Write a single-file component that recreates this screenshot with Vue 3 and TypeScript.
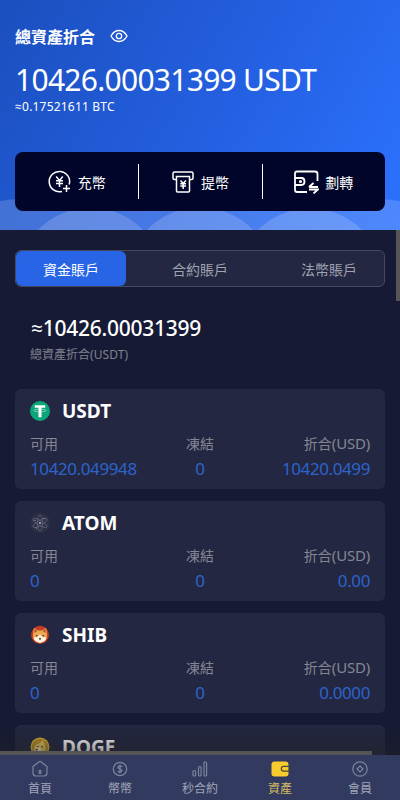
<script setup lang="ts">
import { ref } from 'vue'

interface Balance {
  available: string
  frozen: string
  value: string
}

interface Asset {
  symbol: string
  balance?: Balance
}

const assets: Asset[] = [
  { symbol: 'USDT', balance: { available: '10420.049948', frozen: '0', value: '10420.0499' } },
  { symbol: 'ATOM', balance: { available: '0', frozen: '0', value: '0.00' } },
  { symbol: 'SHIB', balance: { available: '0', frozen: '0', value: '0.0000' } },
  { symbol: 'DOGE' },
]

const tabs = ['資金賬戶', '合約賬戶', '法幣賬戶']
const activeTab = ref(0)
</script>

<template>
  <div class="page">
    <header class="hero">
      <svg class="waves" viewBox="0 0 400 230" aria-hidden="true">
        <path d="M0 201Q30 197 60 197H340Q370 197 400 201V230H0Z" />
        <path d="M38 230A73 73 0 0 1 143 230Z" />
        <path d="M147 230A73 73 0 0 1 253 230Z" />
        <path d="M258 230A73 73 0 0 1 362 230Z" />
      </svg>
      <div class="hero-title">
        <span>總資產折合</span>
        <svg class="eye" viewBox="0 0 18 14">
          <path d="M1 7Q4 1.5 9 1.5T17 7Q14 12.5 9 12.5T1 7Z" />
          <circle cx="9" cy="7" r="2.7" />
        </svg>
      </div>
      <div class="total">10426.00031399 USDT</div>
      <div class="btc">≈0.17521611 BTC</div>
      <div class="actions">
        <button class="action">
          <svg class="action-icon" viewBox="0 0 24 24">
            <path d="M21.2 14.5A10.2 10.2 0 1 0 14 21.5M18.5 15v7M15 18.5h7" />
            <path d="M8.2 6.5l3.3 4 3.3-4M8 10.8h7M8 13.5h7M11.5 10.5V17" />
          </svg>
          <span>充幣</span>
        </button>
        <button class="action">
          <svg class="action-icon" viewBox="0 0 24 24">
            <path d="M5.5 9.500H3.500Q2 9.500 2 8V3.500Q2 2 3.500 2h17Q22 2 22 3.500V8Q22 9.500 20.500 9.500H18.500M5.500 6.500h13V21Q18.500 22 17.500 22H6.500Q5.500 22 5.500 21Z" />
            <path d="M9.500 10.500l2.700 3 2.700-3M9.300 13.800h5.700M9.300 16h5.700M12.200 13.500V19" />
          </svg>
          <span>提幣</span>
        </button>
        <button class="action">
          <svg class="action-icon wide" viewBox="0 0 26 24">
            <path d="M14 22H4Q2 22 2 20V3.500Q2 1.500 4 1.500H22Q24.500 1.500 24.500 4V11M2 8H8.500Q11.500 8 11.500 11.500T8.500 15H2" />
            <path d="M16 17h9M20.500 13L16 17M16 19.500h9L20.500 23.500" />
            <circle cx="7.500" cy="11.500" r=".7" />
          </svg>
          <span>劃轉</span>
        </button>
      </div>
    </header>

    <main class="body">
      <nav class="tabs">
        <button v-for="(tab, i) in tabs" :key="tab" class="tab" :class="{ active: i === activeTab }" @click="activeTab = i">
          {{ tab }}
        </button>
      </nav>

      <section class="summary">
        <div class="summary-value">≈10426.00031399</div>
        <div class="summary-label">總資產折合<span class="unit-small">(USDT)</span></div>
      </section>

      <article v-for="asset in assets" :key="asset.symbol" class="card">
        <div class="card-head">
          <svg v-if="asset.symbol === 'USDT'" class="coin" viewBox="0 0 20 20">
            <circle cx="10" cy="10" r="10" fill="#0da579" />
            <ellipse cx="10" cy="9.500" rx="6" ry="1.300" fill="none" stroke="#a5dfcb" stroke-width=".7" />
            <path d="M4.800 4.200h10.400v2.600h-3.700v9.400H8.500V6.800H4.800Z" fill="#fff" />
          </svg>
          <svg v-else-if="asset.symbol === 'ATOM'" class="coin" viewBox="0 0 20 20">
            <circle cx="10" cy="10" r="10" fill="#2e3045" />
            <g fill="none" stroke="#62667f" stroke-width=".7">
              <ellipse cx="10" cy="10" rx="2.500" ry="8" />
              <ellipse cx="10" cy="10" rx="2.500" ry="8" transform="rotate(60 10 10)" />
              <ellipse cx="10" cy="10" rx="2.500" ry="8" transform="rotate(120 10 10)" />
            </g>
            <g fill="#b2b4c4">
              <circle cx="10" cy="10" r="1.100" />
              <circle cx="5" cy="7.500" r=".6" />
              <circle cx="14" cy="5.500" r=".6" />
              <circle cx="6.500" cy="15" r=".6" />
            </g>
          </svg>
          <svg v-else-if="asset.symbol === 'SHIB'" class="coin" viewBox="0 0 20 20">
            <circle cx="10" cy="9.800" r="9" fill="#c83c25" />
            <path d="M4 3l4 2.500h4L16 3l1 7q0 4-2.500 6L10 18l-4.500-2Q3 14 3 10Z" fill="#efaa53" />
            <path d="M4.500 4l2.700 2-2.500 2ZM15.500 4l-2.700 2 2.500 2Z" fill="#a3552c" />
            <path d="M3.400 12.500l4-.5L10 9.500l2.600 2.500 4 .5q-.5 2.800-3 4.200L10 18l-3.600-1.300Q3.900 15.300 3.400 12.500Z" fill="#fff2dc" />
            <path d="M5.500 10l2.500.8-1.500.8ZM14.500 10l-2.500.8 1.500.8ZM8.700 13.200h2.600L10 15.300Z" fill="#24191a" />
          </svg>
          <svg v-else class="coin" viewBox="0 0 20 20">
            <circle cx="10" cy="10" r="9.500" fill="#dcb032" />
            <circle cx="10" cy="10" r="8" fill="#b88d26" />
            <path d="M4 15q-.5-6 3-8l2-.5L13 3l1.500 4q2 4 .5 8l-5 3Z" fill="#e2c35c" />
            <path d="M4.500 12l4-2.500 3 3-2.500 3.500-4 .2Z" fill="#f6e8c0" />
            <path d="M7 9h1.500v1.200H7ZM11.500 9H13v1.200h-1.500ZM5.500 12h2.300v1.500H5.500Z" fill="#4e3816" />
          </svg>
          <span class="symbol">{{ asset.symbol }}</span>
        </div>
        <div v-if="asset.balance" class="grid">
          <div class="col">
            <div class="label">可用</div>
            <div class="num">{{ asset.balance.available }}</div>
          </div>
          <div class="col center">
            <div class="label">凍結</div>
            <div class="num">{{ asset.balance.frozen }}</div>
          </div>
          <div class="col right">
            <div class="label">折合<span class="unit">(USD)</span></div>
            <div class="num">{{ asset.balance.value }}</div>
          </div>
        </div>
      </article>
    </main>

    <div class="scroll-y"></div>
    <div class="fade"></div>
    <div class="scroll-x"></div>

    <footer class="tabbar">
      <a class="item">
        <svg class="nav-icon" viewBox="0 0 18 18"><path d="M2 6.500L8.200 1.700Q9 1.200 9.800 1.700L16 6.500V13Q16 16 13 16H5Q2 16 2 13ZM8.300 10.500h1.400v3H8.300Z" /></svg>
        <span>首頁</span>
      </a>
      <a class="item">
        <svg class="nav-icon" viewBox="0 0 18 18"><circle cx="9" cy="9" r="6.700" /><path d="M11.200 6.800Q9 5.200 7.500 6.500T9 9t1.500 2.500-3.700-.3M9 4.500v9" /></svg>
        <span>幣幣</span>
      </a>
      <a class="item">
        <svg class="nav-icon" viewBox="0 0 18 18"><rect x="2" y="10.500" width="2.600" height="5.500" rx="1" /><rect x="7.500" y="6.500" width="2.600" height="9.500" rx="1" /><rect x="13" y="2" width="2.600" height="14" rx="1" /></svg>
        <span>秒合約</span>
      </a>
      <a class="item selected">
        <svg class="nav-icon" viewBox="0 0 18 18"><rect class="wallet" x=".5" y="1.500" width="17" height="15" rx="3" /><path class="clasp" d="M18 6.300h-5.300a2.400 2.400 0 0 0 0 4.800H18Z" /></svg>
        <span>資產</span>
      </a>
      <a class="item">
        <svg class="nav-icon" viewBox="0 0 18 18"><circle cx="9" cy="9" r="7.200" /><path d="M9 6l3 3-3 3-3-3Z" /></svg>
        <span>會員</span>
      </a>
    </footer>
  </div>
</template>

<style>
body {
  background: #161a35;
  overflow: hidden;
}
</style>

<style scoped>
.page {
  position: relative;
  height: 800px;
  overflow: hidden;
  background: #161a35;
  color: #fff;
  font-family: 'Noto Sans', 'Open Sans', 'Noto Sans CJK TC', sans-serif;
}

.page * {
  box-sizing: border-box;
}

button {
  border: 0;
  padding: 0;
  background: none;
  color: inherit;
  font: inherit;
}

svg {
  display: block;
  flex: none;
}

.hero {
  position: relative;
  height: 230px;
  padding: 25px 15px 0;
  background: linear-gradient(120deg, #1b4fbe 0%, #2460e2 55%, #2c72ff 100%);
}

.waves {
  position: absolute;
  inset: 0;
  width: 400px;
  height: 230px;
  fill: rgba(255, 255, 255, 0.16);
}

.hero-title {
  display: flex;
  align-items: center;
  gap: 15px;
  height: 22px;
  font-size: 16px;
  font-weight: 700;
}

.eye {
  width: 18px;
  height: 14px;
  fill: none;
  stroke: #fff;
  stroke-width: 1.3;
}

.total {
  margin-top: 13px;
  font-size: 30px;
  letter-spacing: -0.72px;
  line-height: 40px;
  white-space: nowrap;
}

.btc {
  font-size: 12px;
  letter-spacing: 0.2px;
  line-height: 14px;
}

.actions {
  position: relative;
  display: flex;
  height: 59px;
  margin-top: 38px;
  border-radius: 8px;
  background: #010529;
}

.action {
  display: flex;
  flex: 1;
  align-items: center;
  justify-content: center;
  gap: 6px;
  font-size: 14px;
}

.action + .action {
  background: linear-gradient(#fff, #fff) left center / 1px 35px no-repeat;
}

.action-icon {
  width: 24px;
  height: 24px;
  fill: none;
  stroke: #fff;
  stroke-width: 1.5;
}

.wide {
  width: 26px;
  stroke-width: 1.8;
}

.body {
  height: 525px;
  padding: 20px 15px 0;
  overflow: hidden;
}

.tabs {
  display: flex;
  justify-content: space-between;
  height: 37px;
  border: 1px solid #444861;
  border-radius: 6px;
  background: #232741;
}

.tab {
  width: 110px;
  border-radius: 6px;
  color: #a0a3b2;
  font-size: 14px;
}

.tab.active {
  background: #2765e6;
  color: #fff;
}

.summary {
  height: 102px;
  padding: 27px 15px 0;
}

.summary-value {
  padding-left: 1px;
  font-size: 21px;
  font-weight: 500;
  letter-spacing: -0.25px;
  line-height: 28px;
}

.summary-label {
  margin-top: 4px;
  color: #80828f;
  font-size: 12px;
  line-height: 18px;
}

.unit-small {
  letter-spacing: 0.1px;
}

.card {
  height: 100px;
  margin-bottom: 12px;
  padding: 11px 15px 0;
  border-radius: 6px;
  background: #232741;
}

.card-head {
  display: flex;
  align-items: center;
  gap: 12px;
  height: 22px;
}

.coin {
  width: 20px;
  height: 20px;
}

.symbol {
  font-size: 19px;
  font-weight: 700;
  line-height: 22px;
}

.grid {
  display: grid;
  grid-template-columns: 1fr 1fr 1fr;
  margin-top: 12px;
}

.center {
  text-align: center;
}

.right {
  text-align: right;
}

.label {
  color: #858693;
  font-size: 14px;
  line-height: 20px;
}

.unit {
  font-size: 15px;
  letter-spacing: -0.2px;
  line-height: 1;
}

.num {
  margin-top: 3px;
  color: #2e63cc;
  font-size: 17px;
  letter-spacing: -0.4px;
  line-height: 24px;
}

.scroll-y {
  position: absolute;
  top: 230px;
  right: 0;
  width: 4px;
  height: 71px;
  background: #555;
}

.fade {
  position: absolute;
  left: 0;
  right: 0;
  bottom: 45px;
  height: 30px;
  background: linear-gradient(transparent, rgba(32, 32, 34, 0.5));
}

.scroll-x {
  position: absolute;
  left: 0;
  bottom: 45px;
  width: 372px;
  height: 4px;
  background: #555557;
}

.tabbar {
  position: absolute;
  left: 0;
  right: 0;
  bottom: 0;
  display: flex;
  height: 45px;
  background: #323b5f;
  color: #a0a5b7;
  font-size: 12px;
}

.item {
  display: flex;
  flex: 1;
  flex-direction: column;
  align-items: center;
  gap: 4px;
  padding-top: 5px;
  line-height: 14px;
}

.nav-icon {
  width: 18px;
  height: 18px;
  fill: none;
  stroke: #7d849d;
  stroke-width: 1.2;
}

.selected {
  color: #d2ba62;
}

.wallet {
  fill: #f8cb2d;
  stroke: none;
}

.clasp {
  fill: #f8cb2d;
  stroke: #4b4633;
}
</style>
